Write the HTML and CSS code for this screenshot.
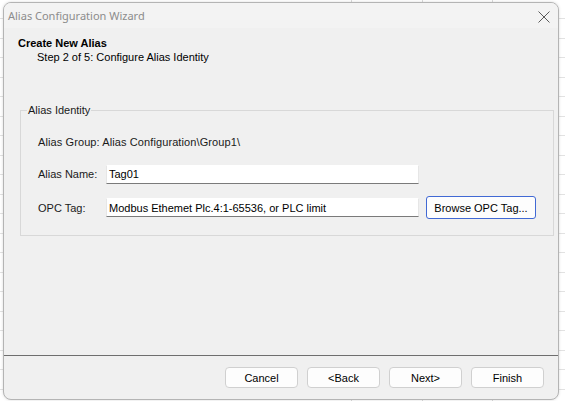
FILE: index.html
```html
<!DOCTYPE html>
<html>
<head>
<meta charset="utf-8">
<link rel="stylesheet" href="styles.css">
</head>
<body>
<div class="sheet"></div>
<div class="dialog">
  <div class="titlebar">
    <span class="title">Alias Configuration Wizard</span>
    <svg class="close" width="12" height="12" viewBox="0 0 12 12"><path d="M0.5 0.5 L11.5 11.5 M11.5 0.5 L0.5 11.5" stroke="#5a5a5a" stroke-width="1" fill="none"/></svg>
  </div>
  <div class="header">
    <div class="h-title">Create New Alias</div>
    <div class="h-step">Step 2 of 5: Configure Alias Identity</div>
  </div>
  <div class="group">
    <span class="group-label">Alias Identity</span>
    <div class="row row-info">Alias Group: Alias Configuration\Group1\</div>
    <div class="row row-name">
      <span class="lbl">Alias Name:</span>
      <div class="textbox">Tag01</div>
    </div>
    <div class="row row-opc">
      <span class="lbl">OPC Tag:</span>
      <div class="textbox">Modbus Ethemet Plc.4:1-65536, or PLC limit</div>
      <button class="browse">Browse OPC Tag...</button>
    </div>
  </div>
  <div class="spacer"></div>
  <div class="separator"></div>
  <div class="footer">
    <button class="btn">Cancel</button>
    <button class="btn">&lt;Back</button>
    <button class="btn">Next&gt;</button>
    <button class="btn">Finish</button>
  </div>
</div>
</body>
</html>
```
FILE: styles.css
```css
html, body {
  margin: 0;
  padding: 0;
  width: 565px;
  height: 401px;
  overflow: hidden;
  background: #ffffff;
  font-family: "Liberation Sans", Arial, sans-serif;
}
.sheet {
  position: absolute;
  left: 0;
  top: 0;
  width: 565px;
  height: 401px;
  background-color: #ffffff;
  background-image:
    linear-gradient(to right, transparent 0, transparent 351px, #dadada 351px, #dadada 352px, transparent 352px, transparent 422px, #dadada 422px, #dadada 423px, transparent 423px, transparent 492px, #dadada 492px, #dadada 493px, transparent 493px),
    repeating-linear-gradient(to bottom, transparent 0, transparent 18.5px, #e2e2e2 18.5px, #e2e2e2 19.5px);
}
.dialog {
  position: absolute;
  left: 3px;
  top: 2px;
  width: 556px;
  height: 398px;
  box-sizing: border-box;
  border: 1px solid #b4b4b4;
  border-radius: 8px;
  background: #f0f0f0;
  box-shadow: 0 0 3px rgba(0,0,0,0.15);
  overflow: hidden;
  display: flex;
  flex-direction: column;
}
.titlebar {
  height: 25px;
  flex: none;
  background: #f3f3f3;
  display: flex;
  align-items: center;
  justify-content: space-between;
  padding: 0 8px 0 4px;
}
.title {
  font-family: "Noto Sans", "Liberation Sans", sans-serif;
  font-size: 11px;
  color: #8c8c8c;
}
.close {
  display: block;
  margin-top: 2px;
}
.header {
  padding: 8px 0 0 14px;
  font-size: 11px;
  line-height: 14px;
  color: #000;
}
.h-title {
  font-weight: bold;
}
.h-step {
  padding-left: 19px;
}
.group {
  position: relative;
  margin: 46px 4px 0 16px;
  border: 1px solid #d8d8d8;
  padding: 22px 0 16px 17px;
  font-size: 11px;
  color: #1a1a1a;
  display: flex;
  flex-direction: column;
}
.group-label {
  position: absolute;
  top: -8px;
  left: 6px;
  padding: 0 1px;
  background: #f0f0f0;
  line-height: 14px;
}
.row {
  display: flex;
  align-items: center;
}
.row-info {
  height: 18px;
  letter-spacing: 0.1px;
}
.row-name {
  margin-top: 14px;
  height: 18px;
}
.row-opc {
  margin-top: 13px;
  height: 23px;
}
.lbl {
  width: 68px;
  flex: none;
}
.textbox {
  width: 313px;
  height: 19px;
  box-sizing: border-box;
  background: #ffffff;
  border: 1px solid #e6e6e6;
  border-top-color: #ffffff;
  border-bottom-color: #7a7a7a;
  padding-left: 2px;
  display: flex;
  align-items: center;
  color: #000;
}
.browse {
  margin-left: 7px;
  width: 110px;
  height: 23px;
  box-sizing: border-box;
  border: 1px solid #4169d4;
  border-radius: 3px;
  background: #fdfdfd;
  font-family: "Liberation Sans", Arial, sans-serif;
  font-size: 11px;
  color: #000;
  padding: 0;
}
.spacer {
  flex: 1;
}
.separator {
  height: 1px;
  background: #6e6e6e;
  flex: none;
}
.footer {
  flex: none;
  display: flex;
  justify-content: flex-end;
  gap: 9px;
  padding: 11px 14px 11px 0;
}
.btn {
  width: 73px;
  height: 21px;
  box-sizing: border-box;
  border: 1px solid #d0d0d0;
  border-radius: 4px;
  background: #fdfdfd;
  font-family: "Liberation Sans", Arial, sans-serif;
  font-size: 11px;
  color: #000;
  padding: 0;
}
```
